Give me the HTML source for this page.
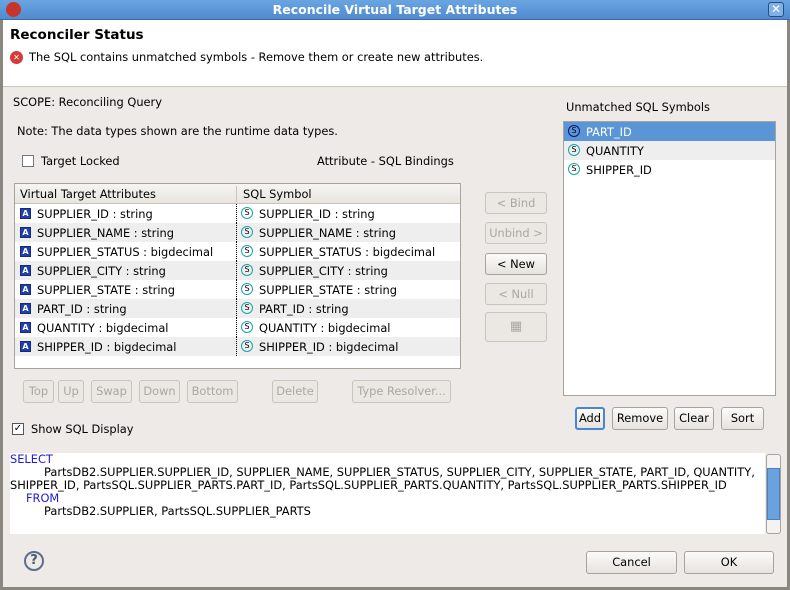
<!DOCTYPE html><html><head><style>
*{margin:0;padding:0;box-sizing:border-box}
body{width:790px;height:590px;position:relative;background:#edeae7;font-family:"DejaVu Sans","Liberation Sans",sans-serif;font-size:11.4px;color:#000;overflow:hidden}
.a{position:absolute;white-space:nowrap}
.btn{position:absolute;border:1px solid #a8a49c;border-radius:3px;background:linear-gradient(#fbfbfa,#e6e3de);text-align:center;color:#000;line-height:21px}
.dis{color:#aaa6a0;border-color:#c9c5bd;background:#ebe8e4}
.row{position:absolute;left:1px;width:445px;height:19px;line-height:19px}
.ai{position:absolute;left:5px;top:4px;width:11px;height:11px;background:#1d3fb0;border:1px solid #1a2a70;color:#fff;font-size:8px;font-weight:bold;line-height:9px;text-align:center}
.si{position:absolute;width:12px;height:12px;border:1.5px solid #14a7a7;border-radius:50%;font-size:8px;line-height:9px;text-align:center;color:#000}
</style></head><body>
<div class="a" style="left:0;top:0;width:790px;height:20px;background:linear-gradient(#6aa5e2,#4f8ad0);border-bottom:1px solid #3b6aa6"></div>
<div class="a" style="left:6px;top:2px;width:15px;height:15px;border-radius:50%;background:#c8332a"></div>
<div class="a" style="left:0;top:2px;width:790px;text-align:center;color:#fff;font-weight:bold;font-size:12.5px">Reconcile Virtual Target Attributes</div>
<div class="a" style="left:768px;top:2px;width:16px;height:15px;border:1px solid #284e80;border-radius:3px;background:#7fb0e6;color:#fff;font-size:12px;line-height:13px;text-align:center;font-weight:bold">✕</div>
<div class="a" style="left:3px;top:20px;width:785px;height:67px;background:#fff;border-bottom:1px solid #c9c5bd"></div>
<div class="a" style="left:0;top:20px;width:3px;height:570px;background:#8a8680"></div>
<div class="a" style="left:787px;top:20px;width:3px;height:570px;background:#8a8680"></div>
<div class="a" style="left:0;top:587px;width:790px;height:3px;background:#8a8680"></div>
<div class="a" style="left:10px;top:27px;font-weight:bold;font-size:13.5px">Reconciler Status</div>
<div class="a" style="left:10px;top:51px;width:13px;height:13px;border-radius:50%;background:#d63a3a;color:#fff;font-size:8px;line-height:13px;text-align:center">✕</div>
<div class="a" style="left:29px;top:50px">The SQL contains unmatched symbols - Remove them or create new attributes.</div>
<div class="a" style="left:13px;top:95px">SCOPE: Reconciling Query</div>
<div class="a" style="left:17px;top:124px">Note: The data types shown are the runtime data types.</div>
<div class="a" style="left:22px;top:155px;width:12px;height:12px;border:1px solid #777;background:#fff"></div>
<div class="a" style="left:41px;top:154px">Target Locked</div>
<div class="a" style="left:317px;top:154px">Attribute - SQL Bindings</div>
<div class="a" style="left:14px;top:183px;width:447px;height:186px;border:1px solid #a8a49c;background:#fff">
<div class="a" style="left:0;top:0;width:445px;height:20px;background:linear-gradient(#f6f5f3,#e8e5e0);border-bottom:1px solid #c9c5bd"></div>
<div class="a" style="left:5px;top:3px">Virtual Target Attributes</div>
<div class="a" style="left:221px;top:2px;width:1px;height:16px;background:#c9c5bd"></div>
<div class="a" style="left:228px;top:3px">SQL Symbol</div>
</div>
<div id="rows"></div>
<div class="btn dis" style="left:485px;top:192px;width:62px;height:22px">&lt; Bind</div>
<div class="btn dis" style="left:485px;top:222px;width:62px;height:22px">Unbind &gt;</div>
<div class="btn" style="left:485px;top:253px;width:62px;height:22px">&lt; New</div>
<div class="btn dis" style="left:485px;top:283px;width:62px;height:22px">&lt; Null</div>
<div class="btn dis" style="left:485px;top:312px;width:62px;height:30px;font-size:13px;line-height:28px">▦</div>
<div class="a" style="left:566px;top:100px">Unmatched SQL Symbols</div>
<div class="a" style="left:563px;top:121px;width:213px;height:275px;border:1px solid #a8a49c;background:#fff">
<div class="a" style="left:0;top:0;width:211px;height:19px;background:#5a95d6"></div>
<div class="a" style="left:0;top:19px;width:211px;height:19px;background:#eeeeee"></div>
<div class="si" style="left:4px;top:3px;border-color:#117;">S</div><div class="a" style="left:22px;top:3px;color:#fff">PART_ID</div>
<div class="si" style="left:4px;top:22px">S</div><div class="a" style="left:22px;top:22px">QUANTITY</div>
<div class="si" style="left:4px;top:41px">S</div><div class="a" style="left:22px;top:41px">SHIPPER_ID</div>
</div>
<div class="btn dis" style="left:23px;top:380px;width:31px;height:23px">Top</div>
<div class="btn dis" style="left:58px;top:380px;width:26px;height:23px">Up</div>
<div class="btn dis" style="left:91px;top:380px;width:41px;height:23px">Swap</div>
<div class="btn dis" style="left:139px;top:380px;width:41px;height:23px">Down</div>
<div class="btn dis" style="left:187px;top:380px;width:51px;height:23px">Bottom</div>
<div class="btn dis" style="left:272px;top:380px;width:46px;height:23px">Delete</div>
<div class="btn dis" style="left:352px;top:380px;width:99px;height:23px">Type Resolver...</div>
<div class="btn" style="left:575px;top:407px;width:30px;height:23px;border:2px solid #4a86d0;line-height:19px">Add</div>
<div class="btn" style="left:612px;top:407px;width:56px;height:23px">Remove</div>
<div class="btn" style="left:674px;top:407px;width:40px;height:23px">Clear</div>
<div class="btn" style="left:721px;top:407px;width:43px;height:23px">Sort</div>
<div class="a" style="left:12px;top:423px;width:12px;height:12px;border:1px solid #555;background:#fff;font-size:10px;line-height:10px;text-align:center">✓</div>
<div class="a" style="left:31px;top:422px">Show SQL Display</div>
<div class="a" style="left:10px;top:453px;width:755px;height:81px;background:#fff;line-height:13px;padding-top:0px">
<div style="color:#1c1cd6">SELECT</div>
<div style="padding-left:34px">PartsDB2.SUPPLIER.SUPPLIER_ID, SUPPLIER_NAME, SUPPLIER_STATUS, SUPPLIER_CITY, SUPPLIER_STATE, PART_ID, QUANTITY,</div>
<div>SHIPPER_ID, PartsSQL.SUPPLIER_PARTS.PART_ID, PartsSQL.SUPPLIER_PARTS.QUANTITY, PartsSQL.SUPPLIER_PARTS.SHIPPER_ID</div>
<div style="color:#1c1cd6;padding-left:16px">FROM</div>
<div style="padding-left:34px">PartsDB2.SUPPLIER, PartsSQL.SUPPLIER_PARTS</div>
</div>
<div class="a" style="left:766px;top:454px;width:15px;height:80px;border:1px solid #a8a49c;border-radius:3px;background:#f4f3f1"></div>
<div class="a" style="left:767px;top:468px;width:13px;height:52px;background:#6aa2e0;border:1px solid #4a80c0"></div>
<div class="a" style="left:24px;top:551px;width:20px;height:20px;border:2px solid #5b6f8a;border-radius:50%;text-align:center;font-weight:bold;font-size:13px;line-height:16px;color:#4a5a70">?</div>
<div class="btn" style="left:586px;top:551px;width:91px;height:23px">Cancel</div>
<div class="btn" style="left:684px;top:551px;width:90px;height:23px">OK</div>
<script>
var L=[["SUPPLIER_ID","string"],["SUPPLIER_NAME","string"],["SUPPLIER_STATUS","bigdecimal"],["SUPPLIER_CITY","string"],["SUPPLIER_STATE","string"],["PART_ID","string"],["QUANTITY","bigdecimal"],["SHIPPER_ID","bigdecimal"]];
var h="";L.forEach(function(r,i){var t=204+i*19;var bg=i%2?"#eeeeee":"#fff";
h+='<div class="row" style="left:15px;top:'+t+'px;background:'+bg+'"><div class="ai">A</div><div class="a" style="left:22px;top:1px">'+r[0]+' : '+r[1]+'</div><div class="a" style="left:221px;top:0;height:19px;border-left:1px dotted #000"></div><div class="si" style="left:226px;top:3px">S</div><div class="a" style="left:244px;top:1px">'+r[0]+' : '+r[1]+'</div></div>';});
document.getElementById("rows").innerHTML=h;
</script>
</body></html>
